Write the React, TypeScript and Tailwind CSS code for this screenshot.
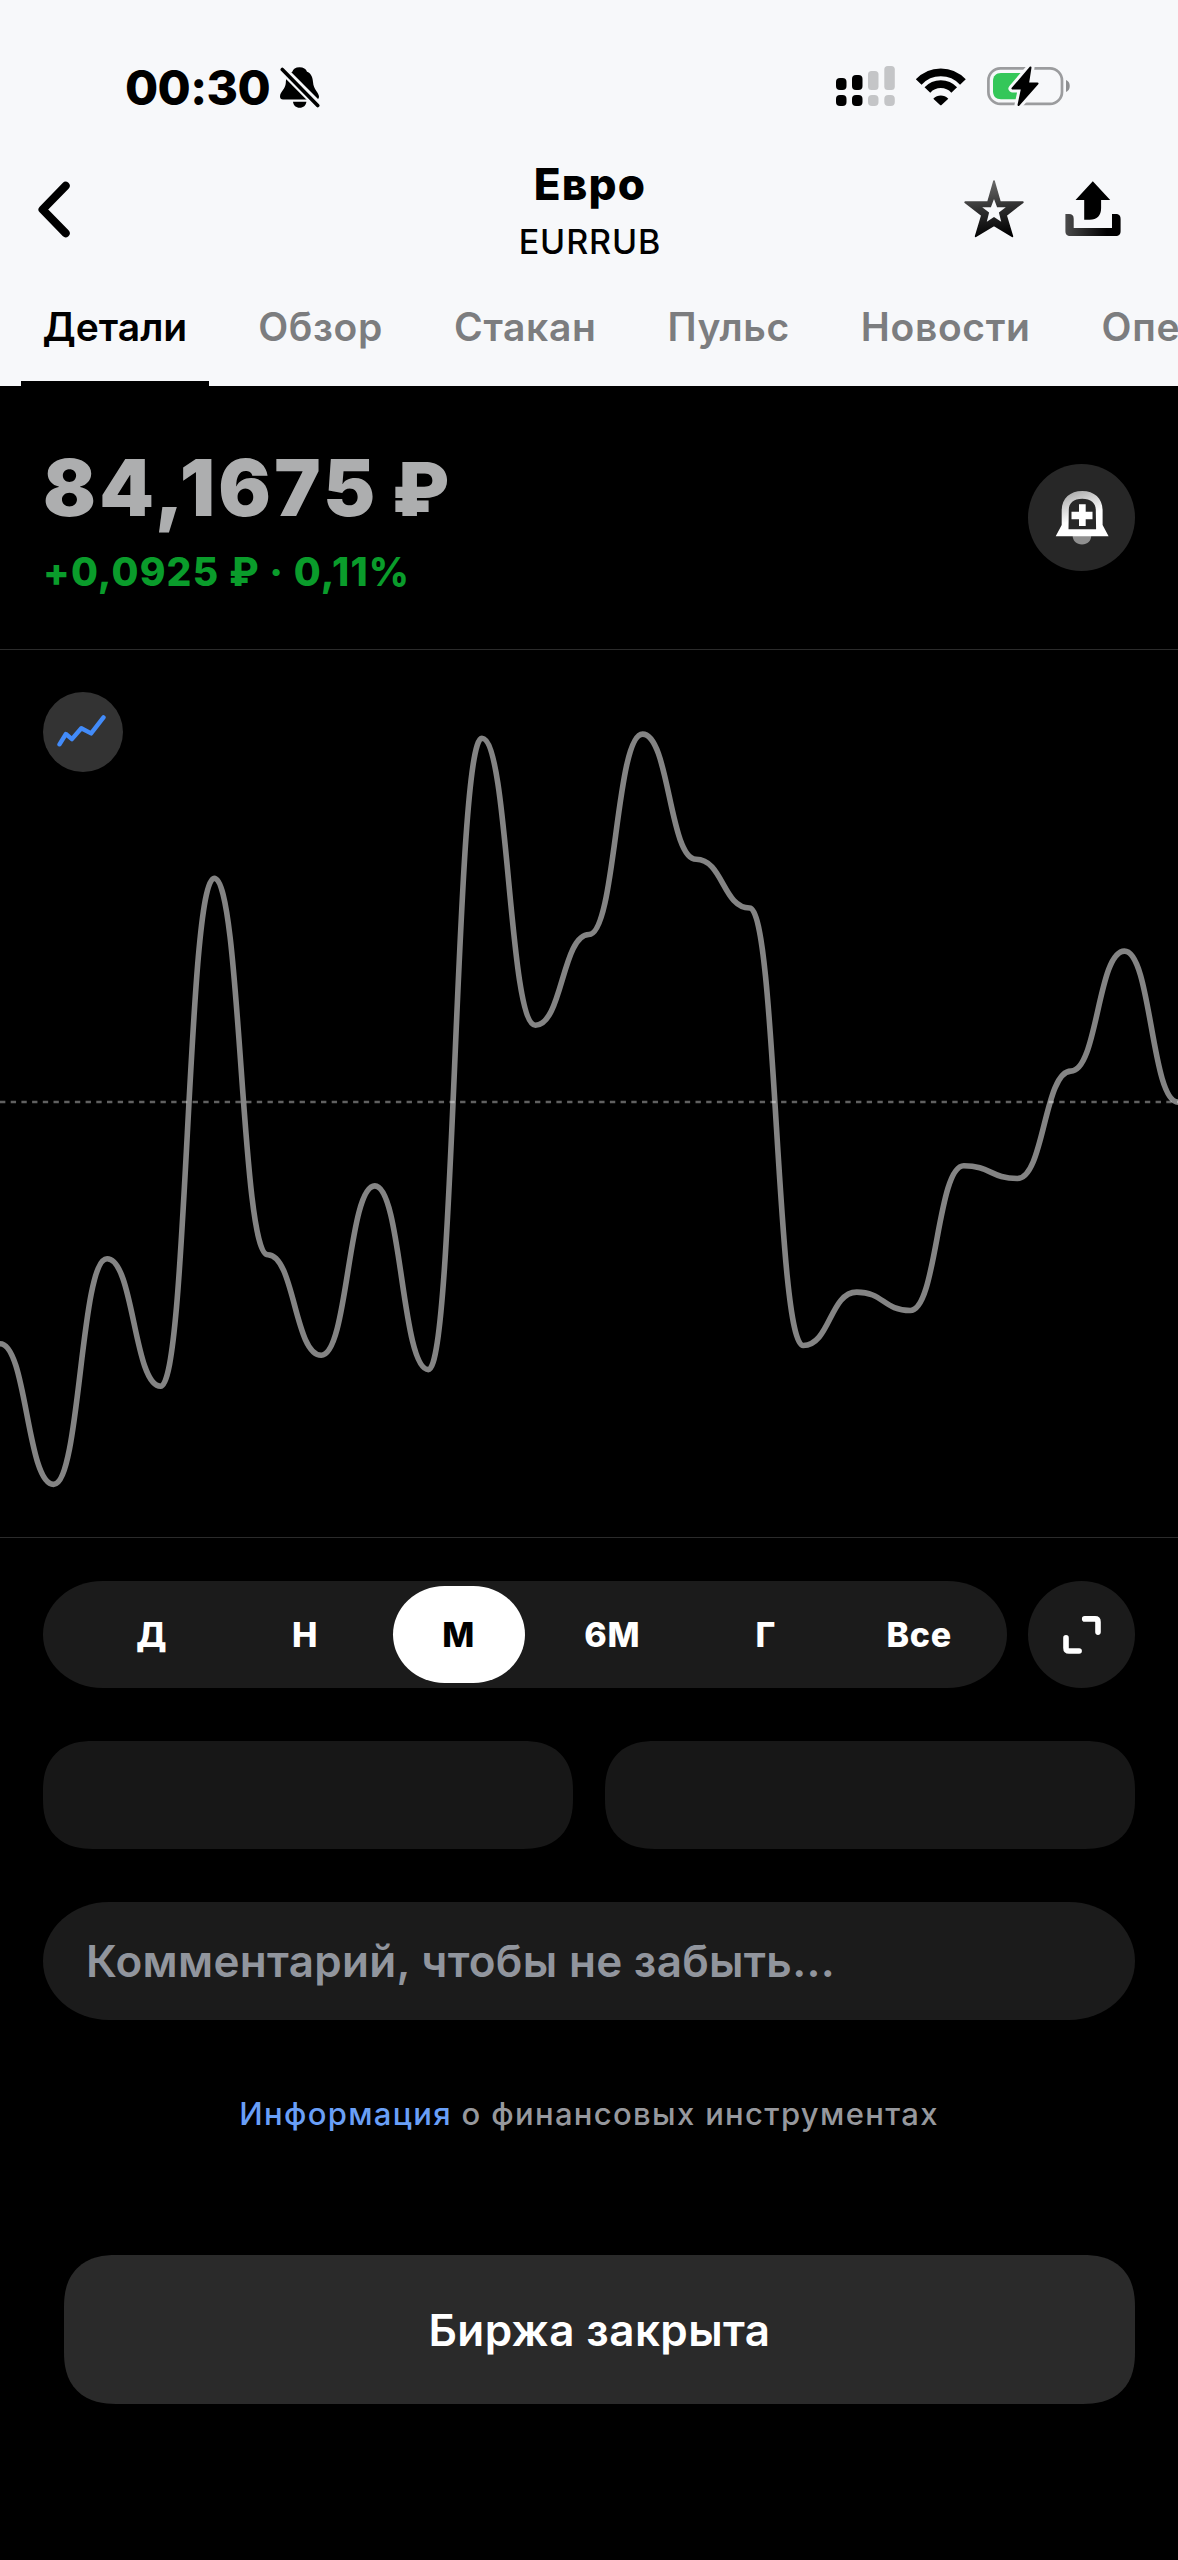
const tabs = ["Детали", "Обзор", "Стакан", "Пульс", "Новости", "Операции"];

const periods = ["Д", "Н", "М", "6М", "Г", "Все"];

const CHART_WIDTH = 1178;
const CHART_HEIGHT = 887;

// y coordinates of the closing prices, evenly spaced over the chart width
const closes = [
  693.7, 834.4, 608.8, 736.2, 228.2, 604.8, 705.2, 535.9, 719.6, 88.2, 375.2,
  284.5, 84.1, 209.3, 258, 695.5, 642.1, 660.5, 515.8, 528.5, 421.1, 301.1,
  452.1,
];

const buildPath = (values: number[]) => {
  const step = CHART_WIDTH / (values.length - 1);
  return values
    .map((y, i) => {
      const x = i * step;
      if (i === 0) return `M${x} ${y}`;
      const mid = x - step / 2;
      return `C${mid} ${values[i - 1]} ${mid} ${y} ${x} ${y}`;
    })
    .join(" ");
};

const BellOffIcon = () => (
  <svg width="40" height="42" viewBox="0 0 40 42">
    <path
      d="M19.5.3c-4 0-6.500 2-7.200 4.500C7.500 7 6 11 5.800 16 5.500 22 0 25 0 29.500c0 2 1 2.900 3 2.900h33c2.200 0 3-.9 3-2.900 0-3.500-5.500-7-6-14.500C32.500 9 30.500 6.200 27 4.800 26 2 23.500.3 19.500.3z"
      fill="#000"
    />
    <path d="M13 34.700h13.400c-.4 3.700-3 6-6.700 6s-6.300-2.300-6.700-6z" fill="#000" />
    <path d="M0 0L41 41.200" stroke="#f7f8fa" strokeWidth="8.600" />
    <path
      d="M2.300 2.500L37.700 38.500"
      stroke="#000"
      strokeWidth="3.600"
      strokeLinecap="round"
    />
  </svg>
);

const SignalIcon = () => (
  <svg width="59" height="40" viewBox="0 0 59 40">
    <g fill="#000">
      <rect x="0" y="12" width="10.500" height="12" rx="4" />
      <rect x="16" y="9" width="10.500" height="15" rx="4" />
      <rect x="0" y="29" width="10.500" height="11" rx="4" />
      <rect x="16" y="29" width="10.500" height="11" rx="4" />
    </g>
    <g fill="#c4c5c7">
      <rect x="32" y="5" width="10.500" height="19" rx="3.500" />
      <rect x="48.300" y="0" width="10.500" height="24" rx="3.500" />
      <rect x="32" y="29" width="10.500" height="11" rx="4" />
      <rect x="48.300" y="29" width="10.500" height="11" rx="4" />
    </g>
  </svg>
);

const WifiIcon = () => (
  <svg width="52" height="39" viewBox="0 0 52 39">
    <path
      d="M3.700 15A30.100 30.100 0 0 1 47.900 15M12.400 23A18.300 18.300 0 0 1 39.200 23"
      fill="none"
      stroke="#000"
      strokeWidth="7.800"
    />
    <path
      d="M18.300 31.800c4.200-4.400 10.800-4.400 15 0l-6.500 6c-.7.700-1.300.7-2 0z"
      fill="#000"
    />
  </svg>
);

const BatteryIcon = () => {
  const bolt = "M43.500 1.500L25.500 22.500H35L31.500 39L50.500 17.500H41z";
  return (
    <svg width="84" height="41" viewBox="0 0 84 41">
      <rect
        x="1.400"
        y="2.400"
        width="73.600"
        height="35.500"
        rx="12"
        fill="none"
        stroke="#9b9c9e"
        strokeWidth="2.700"
      />
      <path d="M79 14c5 1.500 5 10.500 0 12z" fill="#8e8f91" />
      <path d="M14 7h22v26.300H14c-5 0-8-3-8-8V15c0-5 3-8 8-8z" fill="#34c759" />
      <path
        d={bolt}
        fill="#f7f8fa"
        stroke="#f7f8fa"
        strokeWidth="8"
        strokeLinejoin="round"
      />
      <path
        d={bolt}
        fill="#000"
        stroke="#000"
        strokeWidth="2"
        strokeLinejoin="round"
      />
    </svg>
  );
};

const BackIcon = () => (
  <svg width="32" height="57" viewBox="0 0 32 57">
    <path
      d="M27.600 4.800L4.600 28.500 27.600 52.200"
      fill="none"
      stroke="#000"
      strokeWidth="8.200"
      strokeLinecap="round"
      strokeLinejoin="round"
    />
  </svg>
);

const StarIcon = () => (
  <svg width="62" height="60" viewBox="0 0 62 60">
    <defs>
      <linearGradient id="star" x1="0.35" y1="0" x2="0.5" y2="1">
        <stop offset="0" stopColor="#6a6a6a" />
        <stop offset="0.5" stopColor="#303030" />
        <stop offset="1" stopColor="#000" />
      </linearGradient>
    </defs>
    <path
      d="M31 2.200L37 23.200H59.800L43 36.200 49.300 57.300 31 46.300 12.700 57.300 19 36.200 2.200 23.200H25z"
      fill="url(#star)"
      stroke="url(#star)"
      strokeWidth="1.800"
      strokeLinejoin="round"
    />
    <path
      d="M31 20L34.100 28.300H42.800L35.900 33.600 38.200 42.800 31 38 23.800 42.800 26.100 33.600 19.200 28.300H27.900z"
      fill="#f7f8fa"
    />
  </svg>
);

const ShareIcon = () => (
  <svg width="56" height="56" viewBox="0 0 56 56">
    <defs>
      <linearGradient id="tray" x1="0" y1="0" x2="1" y2="0">
        <stop offset="0" stopColor="#4a4a4a" />
        <stop offset="0.75" stopColor="#000" />
      </linearGradient>
    </defs>
    <path
      d="M.4 33H4c3.200 0 4.700 1.500 4.700 4.700V47H47V33h3.600c3.500 0 5 1.500 5 5v12c0 3.500-1.500 5-5 5H5.400c-3.500 0-5-1.500-5-5z"
      fill="url(#tray)"
    />
    <path
      d="M27.800.3L45.200 19h-9.100v8c0 7.500-4 11.700-11.400 11.700h-5.500V19h-8.700z"
      fill="#000"
    />
  </svg>
);

const BellPlusIcon = () => (
  <svg width="54" height="54" viewBox="27 27 54 54">
    <defs>
      <linearGradient id="bell" x1="0.2" y1="0" x2="0.45" y2="0.6">
        <stop offset="0" stopColor="#a5a5a5" />
        <stop offset="1" stopColor="#fff" />
      </linearGradient>
    </defs>
    <path d="M44.600 71h18.700c0 6-3.800 9.500-9.300 9.500S44.600 77 44.600 71z" fill="#8f8f8f" />
    <path
      d="M27.700 72.200L33.700 61V46.500C33.700 34.500 42 27 54.200 27s20.400 7.500 20.400 19.500V61l6 11.200zM40.500 65.300h27.600L67.800 46c0-7-5-11.300-13.600-11.300S40.800 39 40.800 46z"
      fill="url(#bell)"
      fillRule="evenodd"
    />
    <path d="M51 40.300h6.700v7.400h6.800v7.600h-6.800V62H51v-6.700h-7.500v-7.600H51z" fill="#fff" />
  </svg>
);

const LineChartIcon = () => (
  <svg width="50" height="34" viewBox="0 0 50 34">
    <path
      d="M2.500 30.300L8.900 20 14.900 25.100 24.300 14.200 34.100 19.400 46.500 3.400"
      fill="none"
      stroke="#428bf9"
      strokeWidth="4.400"
      strokeLinecap="round"
      strokeLinejoin="round"
    />
  </svg>
);

const ExpandIcon = () => (
  <svg width="38" height="38" viewBox="0 0 38 38">
    <path
      d="M21.700 2.900H32c2 0 3 1 3 3v10.200M3 21.900V32c0 2 1 3 3 3h10.100"
      fill="none"
      stroke="#fff"
      strokeWidth="5.600"
      strokeLinecap="round"
    />
  </svg>
);

const App = () => {
  return (
    <div className="h-[2560px] w-[1178px] overflow-hidden bg-black font-[Inter,'Liberation_Sans',sans-serif]">
      <header className="bg-[#f7f8fa] text-black">
        {/* Status bar */}
        <div className="flex h-[147px] items-center pt-[28px] pr-[107px] pl-[125px]">
          <span className="text-5xl font-extrabold tracking-[-0.600px]">00:30</span>
          <div className="ml-[10px]">
            <BellOffIcon />
          </div>
          <div className="ml-auto flex items-center pb-[3px]">
            <SignalIcon />
            <div className="ml-[20px]">
              <WifiIcon />
            </div>
            <div className="ml-[20px]">
              <BatteryIcon />
            </div>
          </div>
        </div>

        {/* Title */}
        <div className="grid h-[124px] grid-cols-[1fr_auto_1fr] items-center pr-[57px] pl-[38px]">
          <button>
            <BackIcon />
          </button>
          <div className="pt-2 pl-[21px] text-center">
            <h1 className="text-[44px] leading-[58px] font-extrabold tracking-[1.200px]">
              Евро
            </h1>
            <p className="text-[34px] leading-[58px] font-medium tracking-[0.900px]">
              EURRUB
            </p>
          </div>
          <div className="flex items-center justify-end gap-10">
            <StarIcon />
            <ShareIcon />
          </div>
        </div>

        {/* Tabs */}
        <nav className="flex h-[115px] gap-7 overflow-hidden pl-[21px]">
          {tabs.map((tab, i) => (
            <button
              key={tab}
              className={
                i === 0
                  ? "shrink-0 border-b-[5px] border-black px-[21.500px] pt-[3px] text-[39px] font-semibold text-black"
                  : "shrink-0 border-b-[5px] border-transparent px-[21.500px] pt-[3px] text-[39px] font-semibold tracking-[0.650px] text-[#7c7d7f]"
              }
            >
              {tab}
            </button>
          ))}
        </nav>
      </header>

      {/* Price */}
      <section className="flex h-[264px] items-center justify-between border-b border-[#2b2b2b] px-[43px]">
        <div className="pt-[17px]">
          <p className="text-[78px] leading-[90px] font-black tracking-[3.300px] whitespace-nowrap text-[#adaeaf]">
            84,1675<span className="ml-[13px] text-[74px]">₽</span>
          </p>
          <p className="text-[39px] leading-[75px] font-extrabold tracking-[1.150px] text-[#0a9c2b]">
            +0,0925 ₽ · 0,11%
          </p>
        </div>
        <button className="flex size-[107px] items-center justify-center rounded-full bg-[#272727]">
          <BellPlusIcon />
        </button>
      </section>

      {/* Chart */}
      <section className="relative h-[888px] border-b border-[#2b2b2b]">
        <svg
          width={CHART_WIDTH}
          height={CHART_HEIGHT}
          viewBox={`0 0 ${CHART_WIDTH} ${CHART_HEIGHT}`}
        >
          <path
            d={buildPath(closes)}
            fill="none"
            stroke="#848484"
            strokeWidth="5.600"
          />
          <path
            d={`M0 452H${CHART_WIDTH}`}
            stroke="#fff"
            strokeOpacity="0.38"
            strokeWidth="2.500"
            strokeDasharray="5.350 5.350"
          />
        </svg>
        <button className="absolute top-[42px] left-[43px] flex size-[80px] items-center justify-center rounded-full bg-[#333] pr-[2px] pb-[3px]">
          <LineChartIcon />
        </button>
      </section>

      <section className="px-[43px] pt-[43px]">
        {/* Periods */}
        <div className="flex justify-between">
          <div className="flex h-[107px] w-[964px] items-center rounded-[60px/54px] bg-[#1b1b1b] pr-[11px] pl-[32px]">
            {periods.map((period) => (
              <button
                key={period}
                className="flex flex-1 justify-center text-[34px] font-extrabold"
              >
                <span
                  className={
                    period === "М"
                      ? "flex h-[97px] w-[132px] items-center justify-center rounded-[52px/49px] bg-white tracking-[0.800px] text-black"
                      : "flex h-[97px] w-[132px] items-center justify-center tracking-[0.800px] text-white"
                  }
                >
                  {period}
                </span>
              </button>
            ))}
          </div>
          <button className="flex size-[107px] items-center justify-center rounded-full bg-[#1b1b1b]">
            <ExpandIcon />
          </button>
        </div>

        {/* Buy and sell placeholders */}
        <div className="mt-[53px] grid grid-cols-2 gap-8">
          <div className="h-[108px] rounded-[50px] bg-[#171717] [corner-shape:superellipse(1.250)]" />
          <div className="h-[108px] rounded-[50px] bg-[#171717] [corner-shape:superellipse(1.250)]" />
        </div>

        <div className="mt-[53px] flex h-[118px] items-center rounded-[66px/59px] bg-[#1b1b1b] px-[43px] text-[44px] font-semibold tracking-[0.300px] text-[#91959d]">
          Комментарий, чтобы не забыть...
        </div>

        <p className="mt-[64px] text-center text-[31px] leading-[60px] font-medium tracking-[1.330px] text-[#96989d]">
          <a className="text-[#699ff7]">Информация</a> о финансовых инструментах
        </p>

        <button className="mt-[111px] ml-[21px] flex h-[149px] w-[1071px] items-center justify-center rounded-[52px] bg-[#2a2a2a] pt-[1px] text-[44px] font-semibold tracking-[0.400px] text-white [corner-shape:superellipse(1.250)]">
          Биржа закрыта
        </button>
      </section>
    </div>
  );
};

export default App;
